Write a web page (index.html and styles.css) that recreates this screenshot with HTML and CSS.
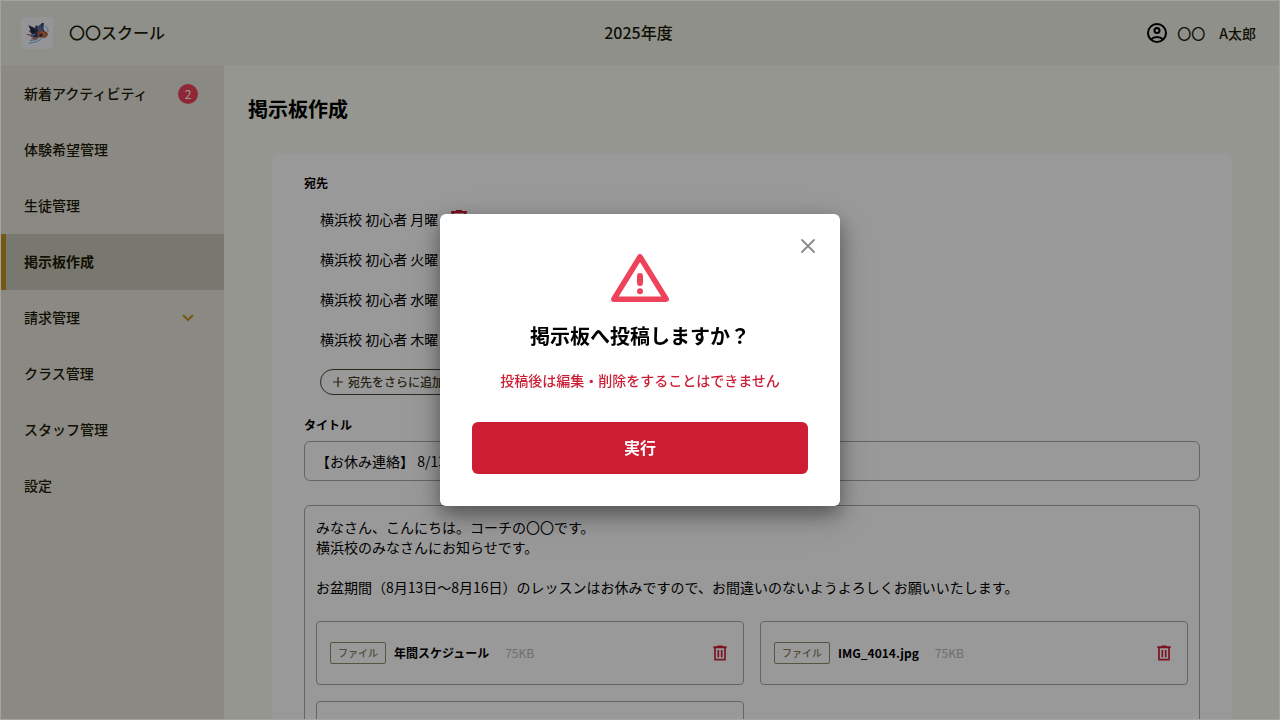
FILE: index.html
```html
<!DOCTYPE html>
<html lang="ja">
<head>
<meta charset="utf-8">
<meta name="viewport" content="width=device-width, initial-scale=1">
<title>掲示板作成</title>
<link rel="stylesheet" href="styles.css">
</head>
<body>
<svg class="defs" aria-hidden="true">
  <symbol id="trash" viewBox="0 0 24 24">
    <path fill="currentColor" d="M9 3h6v1h5v2.200H4V4h5z"/>
    <path fill="none" stroke="currentColor" stroke-width="2" stroke-linejoin="round" d="M6 5v15h12V5"/>
    <path fill="currentColor" d="M9 8.500h2V17H9zM13 8.500h2V17h-2z"/>
  </symbol>
</svg>
<div class="app">
  <header class="header">
    <div class="brand">
      <svg class="logo" viewBox="0 0 32 32" aria-hidden="true">
        <rect width="32" height="32" rx="4" fill="#f9f9fd"/>
        <path d="M7 8l7 3 1-3 3 2 3-4h2l-1 5 2 4-3 5-8 1-4-2 2-2-3-3 2-1z" fill="#39405c"/>
        <path d="M16 10l5-4-1 5 3-3-1 6-4 3z" fill="#5b6fa2"/>
        <path d="M8 9l7 5-1 3-4-3z" fill="#1d2544"/>
        <path d="M10 18l5-2-3 4z" fill="#8291bd"/>
        <path d="M16 15l6-1 4 1 1 3-3 3-7-1z" fill="#a95f43"/>
        <path d="M20 14l3 1 2 4-3 1-5-2z" fill="#dd7340"/>
        <path d="M18 17l3-1 1 3-3 1z" fill="#333b58"/>
        <path d="M5 17l5 0-2 2zM9 22l6-2 3 0-3 3z" fill="#d07a5a"/>
        <path d="M8 26c6 0 10-2 13-5M9 23.500c4 0 7-1 9-3M24 9c3 2 3 3 3 6" fill="none" stroke="#4f9fdd" stroke-width=".8"/>
      </svg>
      <span>〇〇スクール</span>
    </div>
    <div class="year">2025年度</div>
    <div class="user">
      <svg class="avatar" viewBox="0 0 24 24" fill="none" stroke="#000" stroke-width="2" aria-hidden="true">
        <circle cx="12" cy="12" r="9"/><circle cx="12" cy="9.500" r="2.500"/><path d="M6 18.500c3-3.300 9-3.300 12 0"/>
      </svg>
      <span>〇〇　A太郎</span>
    </div>
  </header>
  <div class="body">
    <nav class="sidebar">
      <a class="item" href="#">新着アクティビティ<span class="badge">2</span></a>
      <a class="item" href="#">体験希望管理</a>
      <a class="item" href="#">生徒管理</a>
      <a class="item active" href="#" aria-current="page">掲示板作成</a>
      <a class="item" href="#">請求管理
        <svg class="chevron" viewBox="0 0 20 20" fill="none" stroke="currentColor" stroke-width="2" aria-hidden="true"><path d="M5 8l5 5 5-5"/></svg>
      </a>
      <a class="item" href="#">クラス管理</a>
      <a class="item" href="#">スタッフ管理</a>
      <a class="item" href="#">設定</a>
    </nav>
    <main class="main">
      <h1 class="page-title">掲示板作成</h1>
      <form class="card">
        <h2 class="label">宛先</h2>
        <ul class="targets">
          <li class="target">横浜校 初心者 月曜<button type="button" class="icon-btn" aria-label="削除"><svg class="trash-lg"><use href="#trash"/></svg></button></li>
          <li class="target">横浜校 初心者 火曜<button type="button" class="icon-btn" aria-label="削除"><svg class="trash-lg"><use href="#trash"/></svg></button></li>
          <li class="target">横浜校 初心者 水曜<button type="button" class="icon-btn" aria-label="削除"><svg class="trash-lg"><use href="#trash"/></svg></button></li>
          <li class="target">横浜校 初心者 木曜<button type="button" class="icon-btn" aria-label="削除"><svg class="trash-lg"><use href="#trash"/></svg></button></li>
        </ul>
        <button type="button" class="add">
          <svg class="plus" viewBox="0 0 12 12" stroke="currentColor" stroke-width="1.200" aria-hidden="true"><path d="M1 6h10M6 1v10"/></svg>宛先をさらに追加
        </button>
        <label class="label title-label" for="title">タイトル</label>
        <input class="title-input" id="title" type="text" value="【お休み連絡】 8/13">
        <div class="editor">
          <textarea class="message" rows="4" aria-label="本文">みなさん、こんにちは。コーチの〇〇です。
横浜校のみなさんにお知らせです。

お盆期間（8月13日〜8月16日）のレッスンはお休みですので、お間違いのないようよろしくお願いいたします。</textarea>
          <div class="files">
            <div class="file"><span class="tag">ファイル</span><span class="name">年間スケジュール</span><span class="size">75KB</span><button type="button" class="icon-btn file-del" aria-label="削除"><svg class="trash-sm"><use href="#trash"/></svg></button></div>
            <div class="file"><span class="tag">ファイル</span><span class="name">IMG_4014.jpg</span><span class="size">75KB</span><button type="button" class="icon-btn file-del" aria-label="削除"><svg class="trash-sm"><use href="#trash"/></svg></button></div>
            <div class="file"></div>
          </div>
        </div>
      </form>
    </main>
  </div>
</div>
<div class="overlay">
  <section class="dialog" role="dialog" aria-modal="true" aria-labelledby="dialog-title">
    <button type="button" class="close" aria-label="閉じる">
      <svg class="close-icon" viewBox="0 0 16 16" fill="none" stroke="currentColor" stroke-width="1.800" stroke-linecap="round"><path d="M2 2l12 12M14 2L2 14"/></svg>
    </button>
    <svg class="warning" viewBox="0 0 58 48" fill="none" stroke="#ee435b" stroke-linejoin="round" stroke-linecap="round" aria-hidden="true">
      <path stroke-width="5.500" d="M29 2.800L55.200 45.200H2.800z"/><path stroke-width="6" d="M29 22v7"/><circle cx="29" cy="37.300" r="3" fill="#ee435b" stroke="none"/>
    </svg>
    <h2 class="dialog-title" id="dialog-title">掲示板へ投稿しますか？</h2>
    <p class="dialog-text">投稿後は編集・削除をすることはできません</p>
    <button type="button" class="submit">実行</button>
  </section>
</div>
</body>
</html>
```
FILE: styles.css
```css
* { box-sizing: border-box; }

body {
  margin: 0;
  background: #f9faef;
  color: #1c1a08;
  font-family: "Noto Sans CJK JP", sans-serif;
  font-size: 14px;
  line-height: 20px;
}

button, input, textarea { font: inherit; color: inherit; }
button { border: 0; padding: 0; background: none; cursor: pointer; }
h1, h2, p, ul { margin: 0; padding: 0; }
svg { display: block; }
.defs { display: none; }

.app {
  display: flex;
  flex-direction: column;
  height: 100vh;
  padding: 1px;
  overflow: hidden;
}

.header {
  display: grid;
  grid-template-columns: 1fr auto 1fr;
  align-items: center;
  flex: none;
  height: 64px;
  padding: 0 23px 0 20px;
  background: #eff0e6;
  font-weight: 500;
}
.brand { display: flex; align-items: center; gap: 16px; font-size: 16px; }
.brand span, .year { padding-bottom: 2px; font-size: 16px; }
.logo { width: 32px; height: 32px; }
.user { display: flex; align-items: center; justify-content: flex-end; gap: 8px; }
.avatar { width: 24px; height: 24px; }

.body { display: flex; flex: 1; min-height: 0; }

.sidebar {
  flex: none;
  width: 223px;
  padding-top: 1px;
  background: #e8e5da;
}
.item {
  display: flex;
  align-items: center;
  justify-content: space-between;
  height: 56px;
  padding: 0 26px 2px 23px;
  color: inherit;
  font-weight: 500;
  text-decoration: none;
}
.item.active {
  padding-left: 18px;
  border-left: 5px solid #bf9123;
  background: #cac8b8;
  font-weight: 700;
}
.badge {
  width: 20px;
  height: 20px;
  margin-top: 2px;
  border-radius: 50%;
  background: #ee435b;
  color: #fff;
  font-size: 12px;
  font-weight: 400;
  text-align: center;
}
.chevron { width: 20px; height: 20px; color: #c59424; }

.main { flex: 1; min-width: 0; padding: 32px 47px 0 24px; overflow: hidden; }
.page-title { color: #000; font-size: 20px; line-height: 24px; }
.card {
  display: flow-root;
  margin: 32px 0 0 24px;
  padding: 20px 32px;
  border-radius: 8px;
  background: #fff;
  color: #000;
}
.label { display: block; font-size: 12px; font-weight: 700; }

.targets { margin: 6px 0 0 16px; list-style: none; }
.target { display: flex; align-items: center; gap: 9px; height: 40px; }
.icon-btn { color: #cc1f36; }
.trash-lg { width: 24px; height: 24px; }
.trash-sm { width: 20px; height: 20px; }

.add {
  display: flex;
  align-items: center;
  gap: 4px;
  height: 26px;
  margin: 10px 0 0 16px;
  padding: 0 16px 0 11px;
  border: 1px solid #4b482f;
  border-radius: 13px;
  color: #3f3c22;
  font-size: 12px;
  font-weight: 500;
}
.plus { width: 12px; height: 12px; }

.title-label { margin-top: 20px; }
.title-input {
  display: block;
  width: 100%;
  height: 40px;
  margin-top: 6px;
  padding: 0 11px;
  border: 1px solid #a9a9a9;
  border-radius: 6px;
  background: #fff;
}
.editor {
  margin-top: 24px;
  padding: 11px;
  border: 1px solid #a9a9a9;
  border-radius: 6px;
}
.message {
  display: block;
  width: 100%;
  height: 80px;
  padding: 0;
  border: 0;
  background: none;
  resize: none;
  overflow: hidden;
}
.files { display: grid; grid-template-columns: 1fr 1fr; gap: 16px; margin-top: 24px; }
.file {
  display: flex;
  align-items: center;
  height: 64px;
  padding: 0 13px;
  border: 1px solid #a9a9a9;
  border-radius: 4px;
  font-size: 12px;
}
.tag {
  padding: 0 7px;
  border: 1px solid #928d6a;
  border-radius: 2px;
  color: #857f5c;
  font-size: 10px;
  font-weight: 500;
}
.name { margin-left: 8px; font-weight: 700; }
.size { margin-left: 16px; color: #b8b8b8; }
.file-del { margin-left: auto; }

.overlay {
  position: fixed;
  inset: 0;
  display: grid;
  place-items: center;
  border: 1px solid #a3a3a1;
  background: rgba(0, 0, 0, 0.4);
}
.dialog {
  position: relative;
  display: flex;
  flex-direction: column;
  align-items: center;
  width: 400px;
  max-width: 100%;
  padding: 40px 32px 32px;
  border-radius: 6px;
  background: #fff;
  box-shadow: 0 8px 20px rgba(0, 0, 0, 0.4), 0 12px 44px 4px rgba(0, 0, 0, 0.12);
}
.close { position: absolute; top: 24px; right: 24px; color: #8a8a8a; }
.close-icon { width: 16px; height: 16px; }
.warning { width: 58px; height: 48px; }
.dialog-title { margin-top: 20px; color: #000; font-size: 20px; line-height: 28px; }
.dialog-text { margin-top: 20px; color: #cc1f36; font-weight: 500; }
.submit {
  width: 100%;
  height: 52px;
  margin-top: 32px;
  padding-bottom: 2px;
  border-radius: 6px;
  background: #cc1d33;
  color: #fff;
  font-size: 16px;
  font-weight: 700;
}
```
